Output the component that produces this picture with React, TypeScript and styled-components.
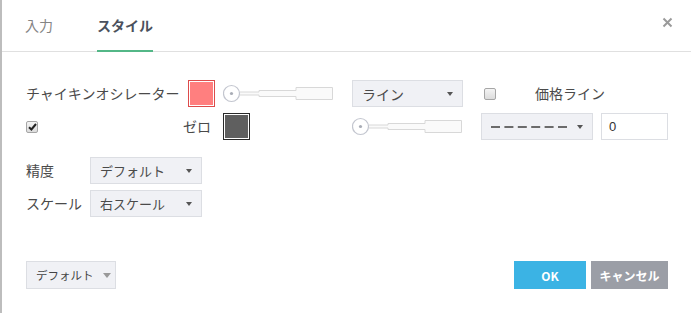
import React from "react";
import styled, { createGlobalStyle } from "styled-components";

const Global = createGlobalStyle`
  html, body { margin: 0; padding: 0; background: #fff; }
  body { font-family: "Noto Sans CJK JP", "Noto Sans", sans-serif; }
`;

const Dialog = styled.div`
  width: 691px;
  height: 313px;
  box-sizing: border-box;
  border-left: 2px solid #bdbdbd;
  background: #fff;
  display: flex;
  flex-direction: column;
  color: #4a4a4a;
  font-family: "Noto Sans CJK JP", "Noto Sans", sans-serif;
`;

const Header = styled.div`
  height: 52px;
  box-sizing: border-box;
  border-bottom: 1px solid #e0e0e0;
  display: flex;
  align-items: stretch;
  padding-left: 23px;
  position: relative;
`;

const Tab = styled.div<{ $active?: boolean }>`
  position: relative;
  display: flex;
  align-items: center;
  padding-bottom: 2px;
  margin-right: 44px;
  font-size: 14px;
  font-weight: ${(p) => (p.$active ? 700 : 400)};
  color: ${(p) => (p.$active ? "#4b515d" : "#858585")};
  &::after {
    content: "";
    display: ${(p) => (p.$active ? "block" : "none")};
    position: absolute;
    left: 0;
    right: 0;
    bottom: -1px;
    height: 2px;
    background: #53b787;
  }
`;

const Close = styled.button`
  position: absolute;
  right: 18px;
  top: 17px;
  width: 11px;
  height: 11px;
  padding: 0;
  border: 0;
  background: transparent;
  display: flex;
`;

const Body = styled.div`
  padding: 28px 0 0 24px;
  display: flex;
  flex-direction: column;
`;

const Row = styled.div<{ $mt?: number }>`
  display: flex;
  align-items: center;
  height: 27px;
  margin-top: ${(p) => p.$mt ?? 0}px;
`;

const Label = styled.span<{ $w?: number; $ml?: number; $right?: boolean }>`
  font-size: 14px;
  line-height: 27px;
  white-space: nowrap;
  color: #4a4a4a;
  width: ${(p) => (p.$w ? `${p.$w}px` : "auto")};
  margin-left: ${(p) => p.$ml ?? 0}px;
  text-align: ${(p) => (p.$right ? "right" : "left")};
  flex-shrink: 0;
`;

const Swatch = styled.span<{ $color: string; $border: string; $ml?: number }>`
  width: 27px;
  height: 27px;
  box-sizing: border-box;
  border: 1px solid ${(p) => p.$border};
  box-shadow: inset 0 0 0 1px #fff;
  background: ${(p) => p.$color};
  margin-left: ${(p) => p.$ml ?? 0}px;
  flex-shrink: 0;
`;

const SliderWrap = styled.span<{ $ml?: number }>`
  display: flex;
  width: 111px;
  height: 20px;
  margin-left: ${(p) => p.$ml ?? 0}px;
  flex-shrink: 0;
`;

const Select = styled.div<{ $w: number; $ml?: number; $fs?: number }>`
  width: ${(p) => p.$w}px;
  height: 27px;
  box-sizing: border-box;
  border: 1px solid #dcdee3;
  background: #f0f1f5;
  display: flex;
  align-items: center;
  justify-content: space-between;
  padding: 0 9px 0 9px;
  margin-left: ${(p) => p.$ml ?? 0}px;
  font-size: ${(p) => p.$fs ?? 14}px;
  color: #4a4a4a;
  flex-shrink: 0;
`;

const Caret = styled.span`
  width: 0;
  height: 0;
  border-left: 3.5px solid transparent;
  border-right: 3.5px solid transparent;
  border-top: 4px solid #555;
  margin-top: 1px;
`;

const Check = styled.span<{ $ml?: number }>`
  width: 12px;
  height: 12px;
  box-sizing: border-box;
  border: 1px solid #a6a6a6;
  border-radius: 2px;
  background: linear-gradient(#f4f4f4, #dcdcdc);
  margin-left: ${(p) => p.$ml ?? 0}px;
  display: flex;
  align-items: center;
  justify-content: center;
  flex-shrink: 0;
`;

const Input = styled.div<{ $ml?: number }>`
  width: 67px;
  height: 27px;
  box-sizing: border-box;
  border: 1px solid #dcdee3;
  background: #fff;
  display: flex;
  align-items: center;
  padding-left: 7px;
  font-size: 13px;
  color: #333;
  margin-left: ${(p) => p.$ml ?? 0}px;
  font-family: "Liberation Sans", Arial, sans-serif;
`;

const Footer = styled.div`
  margin-top: 44px;
  display: flex;
  justify-content: space-between;
  align-items: center;
  padding: 0 23px 0 24px;
`;

const FooterSelect = styled.div`
  width: 90px;
  height: 28px;
  box-sizing: border-box;
  border: 1px solid #dcdee3;
  background: #f0f1f5;
  display: flex;
  align-items: center;
  padding: 0 0 0 9px;
  gap: 9px;
  font-size: 11.5px;
  color: #444;
`;

const FooterCaret = styled.span`
  width: 0;
  height: 0;
  border-left: 4px solid transparent;
  border-right: 4px solid transparent;
  border-top: 5px solid #999;
`;

const Buttons = styled.div`
  display: flex;
  gap: 5px;
`;

const Btn = styled.button<{ $bg: string; $w: number }>`
  width: ${(p) => p.$w}px;
  height: 28px;
  border: 0;
  padding: 0;
  background: ${(p) => p.$bg};
  color: #fff;
  font-weight: 700;
  font-size: 12px;
  font-family: "Noto Sans CJK JP", "Noto Sans", sans-serif;
`;

const Slider = () => (
  <svg width="111" height="20" viewBox="0 0 111 20">
    <path
      d="M16.5 8 H36 V6.5 H73 V3.5 H109.5 V15.5 H73 V12.5 H36 V11 H16.5 Z"
      fill="#fafafa"
      stroke="#d8d8d8"
      strokeWidth="1"
    />
    <circle cx="8.5" cy="9.5" r="8" fill="#fff" stroke="#c3c6cf" strokeWidth="1.2" />
    <circle cx="8.5" cy="9.5" r="1.6" fill="#a9adb6" />
  </svg>
);

export default function App() {
  return (
    <>
      <Global />
      <Dialog>
        <Header>
          <Tab>入力</Tab>
          <Tab $active>スタイル</Tab>
          <Close aria-label="close">
            <svg width="11" height="11" viewBox="0 0 11 11">
              <path d="M1.5 1.5 L9.5 9.5 M9.5 1.5 L1.5 9.5" stroke="#9a9a9a" strokeWidth="2" />
            </svg>
          </Close>
        </Header>
        <Body>
          <Row>
            <Label $w={162}>チャイキンオシレーター</Label>
            <Swatch $color="#ff7f7f" $border="#dd4b4b" />
            <SliderWrap $ml={8}>
              <Slider />
            </SliderWrap>
            <Select $w={111} $ml={18}>
              <span>ライン</span>
              <Caret />
            </Select>
            <Check $ml={21} />
            <Label $ml={39}>価格ライン</Label>
          </Row>
          <Row $mt={6}>
            <Check>
              <svg width="9" height="8" viewBox="0 0 9 8">
                <path d="M1 4.2 L3.4 6.5 L8 1" stroke="#222" strokeWidth="2" fill="none" />
              </svg>
            </Check>
            <Label $w={173} $right>ゼロ</Label>
            <Swatch $color="#5f5f5f" $border="#2a2a2a" $ml={12} />
            <SliderWrap $ml={102}>
              <Slider />
            </SliderWrap>
            <Select $w={112} $ml={18}>
              <svg width="76" height="4" viewBox="0 0 76 4">
                <line x1="0" y1="2" x2="76" y2="2" stroke="#6b6b6b" strokeWidth="2" strokeDasharray="9 4.4" />
              </svg>
              <Caret />
            </Select>
            <Input $ml={8}>0</Input>
          </Row>
          <Row $mt={17}>
            <Label $w={64}>精度</Label>
            <Select $w={112} $fs={13}>
              <span>デフォルト</span>
              <Caret />
            </Select>
          </Row>
          <Row $mt={6}>
            <Label $w={64}>スケール</Label>
            <Select $w={112} $fs={13}>
              <span>右スケール</span>
              <Caret />
            </Select>
          </Row>
        </Body>
        <Footer>
          <FooterSelect>
            <span>デフォルト</span>
            <FooterCaret />
          </FooterSelect>
          <Buttons>
            <Btn $bg="#3bb3e4" $w={72}>OK</Btn>
            <Btn $bg="#9b9ea6" $w={77}>キャンセル</Btn>
          </Buttons>
        </Footer>
      </Dialog>
    </>
  );
}
